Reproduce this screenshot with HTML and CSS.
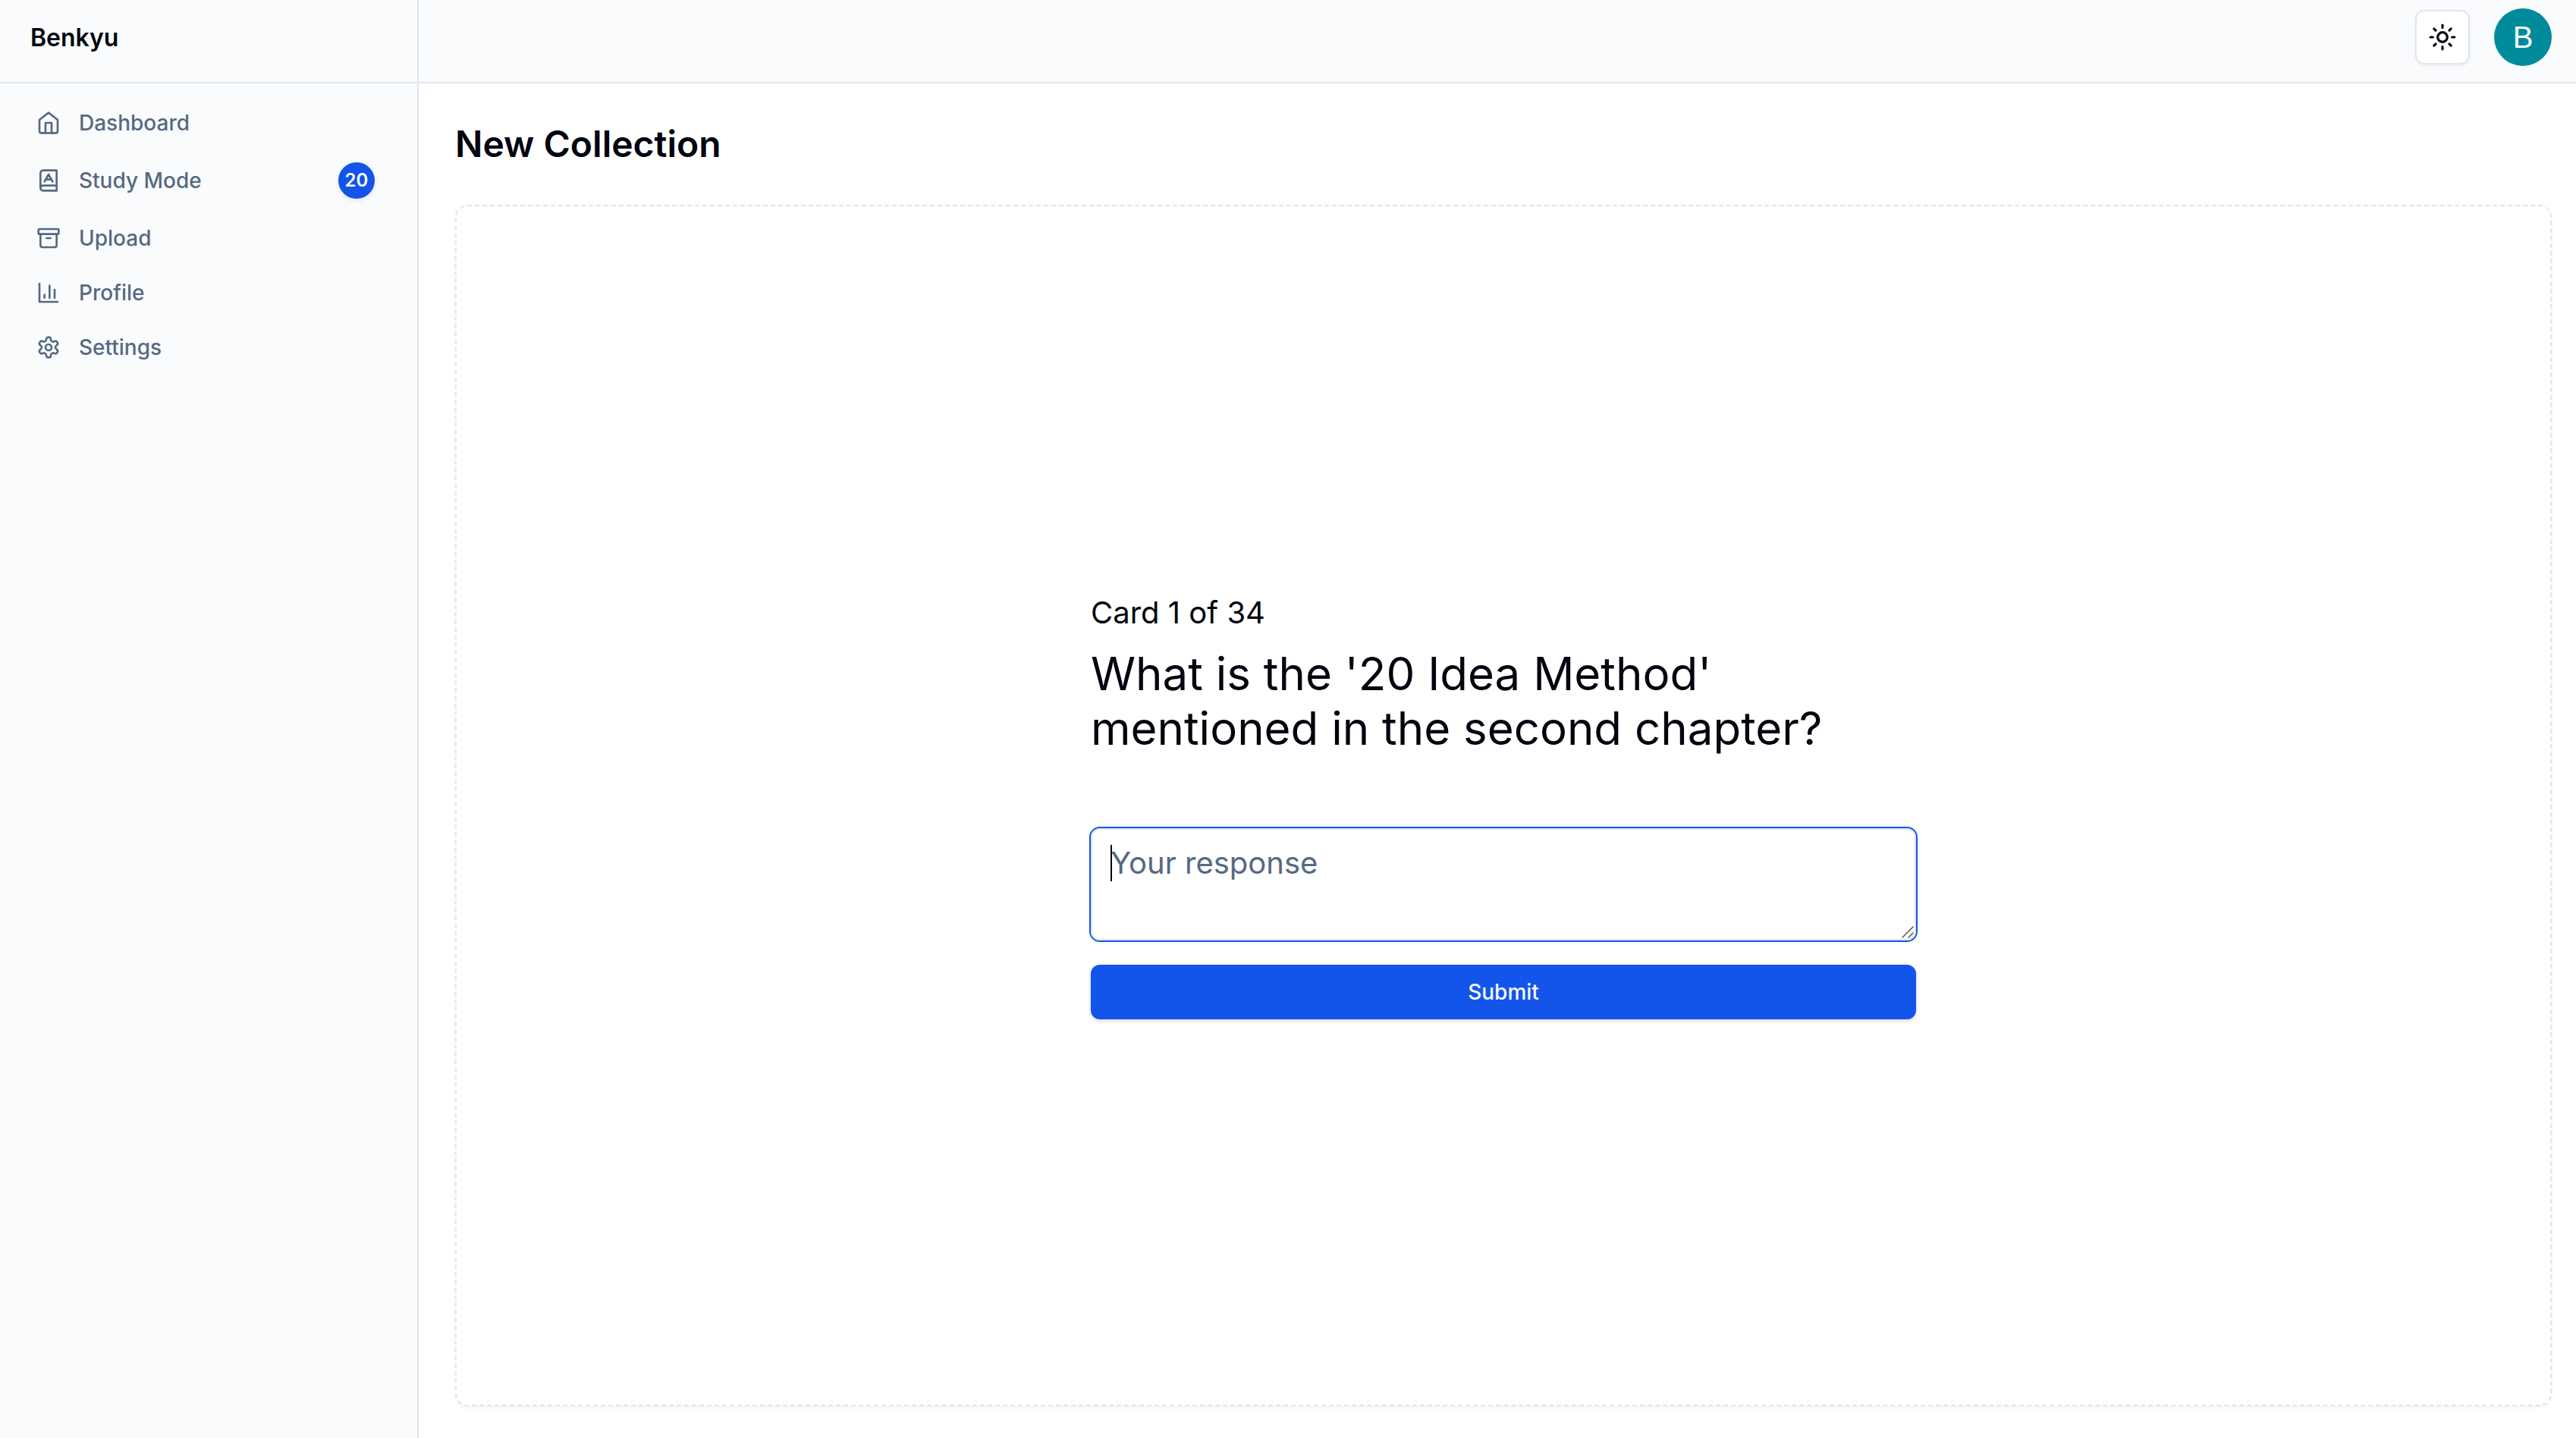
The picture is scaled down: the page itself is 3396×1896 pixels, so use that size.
FILE: index.html
```html
<!doctype html>
<html lang="en">
<head>
  <meta charset="UTF-8">
  <meta name="viewport" content="width=device-width,initial-scale=1">
  <title>Benkyu</title>
  <link rel="stylesheet" href="styles.css">
</head>
<body>
<div class="layout">
  <aside class="sidebar">
    <div class="brand"><a href="#">Benkyu</a></div>
    <nav class="nav">
      <a href="#">
        <svg class="icon" viewBox="0 0 24 24"><path d="m3 9 9-7 9 7v11a2 2 0 0 1-2 2H5a2 2 0 0 1-2-2z"/><path d="M9 22V12h6v10"/></svg>
        Dashboard
      </a>
      <a href="#">
        <svg class="icon" viewBox="0 0 24 24"><path d="M4 19.5v-15A2.5 2.5 0 0 1 6.5 2H20v20H6.5a2.5 2.5 0 0 1 0-5H20"/><path d="m8 13 4-7 4 7"/><path d="M9.1 11h5.7"/></svg>
        Study Mode
        <span class="badge">20</span>
      </a>
      <a href="#">
        <svg class="icon" viewBox="0 0 24 24"><rect width="20" height="5" x="2" y="3" rx="1"/><path d="M4 8v11a2 2 0 0 0 2 2h12a2 2 0 0 0 2-2V8"/><path d="M10 12h4"/></svg>
        Upload
      </a>
      <a href="#">
        <svg class="icon" viewBox="0 0 24 24"><path d="M3 3v18h18"/><path d="M18 17V9"/><path d="M13 17V5"/><path d="M8 17v-3"/></svg>
        Profile
      </a>
      <a href="#">
        <svg class="icon" viewBox="0 0 24 24"><path d="M12.22 2h-.44a2 2 0 0 0-2 2v.18a2 2 0 0 1-1 1.73l-.43.25a2 2 0 0 1-2 0l-.15-.08a2 2 0 0 0-2.73.73l-.22.38a2 2 0 0 0 .73 2.73l.15.1a2 2 0 0 1 1 1.72v.51a2 2 0 0 1-1 1.74l-.15.09a2 2 0 0 0-.73 2.73l.22.38a2 2 0 0 0 2.73.73l.15-.08a2 2 0 0 1 2 0l.43.25a2 2 0 0 1 1 1.73V20a2 2 0 0 0 2 2h.44a2 2 0 0 0 2-2v-.18a2 2 0 0 1 1-1.73l.43-.25a2 2 0 0 1 2 0l.15.08a2 2 0 0 0 2.73-.73l.22-.39a2 2 0 0 0-.73-2.73l-.15-.08a2 2 0 0 1-1-1.74v-.5a2 2 0 0 1 1-1.74l.15-.09a2 2 0 0 0 .73-2.73l-.22-.38a2 2 0 0 0-2.73-.73l-.15.08a2 2 0 0 1-2 0l-.43-.25a2 2 0 0 1-1-1.73V4a2 2 0 0 0-2-2z"/><circle cx="12" cy="12" r="3"/></svg>
        Settings
      </a>
    </nav>
  </aside>

  <div class="page">
    <header class="topbar">
      <button type="button" class="theme" aria-label="Toggle theme">
        <svg viewBox="0 0 24 24"><circle cx="12" cy="12" r="4"/><path d="M12 2v2"/><path d="M12 20v2"/><path d="m4.93 4.93 1.41 1.41"/><path d="m17.66 17.66 1.41 1.41"/><path d="M2 12h2"/><path d="M20 12h2"/><path d="m6.34 17.66-1.41 1.41"/><path d="m19.07 4.93-1.41 1.41"/></svg>
      </button>
      <button type="button" class="avatar" aria-label="Account">B</button>
    </header>

    <main class="main">
      <h1>New Collection</h1>
      <section class="panel">
        <form class="card">
          <p class="count">Card 1 of 34</p>
          <h2>What is the '20 Idea Method' mentioned in the second chapter?</h2>
          <div class="field">
            <textarea rows="2" placeholder="Your response" aria-label="Your response" autofocus></textarea>
            <span class="caret"></span>
            <svg class="grip" viewBox="0 0 16 16"><path d="M1 15 15 1M9 15l6-6"/></svg>
          </div>
          <button type="submit" class="submit">Submit</button>
        </form>
      </section>
    </main>
  </div>
</div>
</body>
</html>
```
FILE: styles.css
```css
* {
	box-sizing: border-box;
}
body {
	margin: 0;
	font-family: Inter, "Liberation Sans", sans-serif;
	font-size: 32px;
	color: #02040f;
	background: #fff;
}
h1, h2, p {
	margin: 0;
}
a {
	color: inherit;
	text-decoration: none;
}
button, textarea {
	font-family: inherit;
}
svg {
	fill: none;
	stroke: currentColor;
	stroke-width: 2;
	stroke-linecap: round;
	stroke-linejoin: round;
}

.layout {
	display: grid;
	grid-template-columns: 552px 1fr;
	min-height: 100vh;
}

/* sidebar */
.sidebar {
	background: #fafbfd;
	border-right: 2px solid #dfe6f0;
}
.brand {
	display: flex;
	align-items: center;
	height: 110px;
	padding: 0 40px 10px;
	border-bottom: 2px solid #dfe6f0;
	font-weight: 600;
}
.nav {
	padding: 16px 32px 16px 24px;
	font-size: 28px;
	line-height: 40px;
	font-weight: 500;
	color: #566982;
}
.nav a {
	display: flex;
	align-items: center;
	gap: 24px;
	padding: 16px 24px;
}
.icon {
	width: 32px;
	height: 32px;
}
.badge {
	display: flex;
	align-items: center;
	justify-content: center;
	width: 48px;
	height: 48px;
	margin-left: auto;
	border-radius: 50%;
	background: #1355ea;
	box-shadow: 0 2px 6px rgba(0, 0, 0, .1);
	color: #f8fafc;
	font-size: 24px;
	font-weight: 600;
}

/* top bar */
.page {
	display: flex;
	flex-direction: column;
}
.topbar {
	display: flex;
	align-items: center;
	justify-content: flex-end;
	gap: 32px;
	height: 110px;
	padding: 0 32px 10px 48px;
	border-bottom: 2px solid #dfe6f0;
	background: #fafbfd;
}
.theme {
	display: flex;
	align-items: center;
	justify-content: center;
	width: 72px;
	height: 72px;
	padding: 0;
	border: 2px solid #dfe6f0;
	border-radius: 12px;
	background: #fff;
	box-shadow: 0 2px 4px rgba(0, 0, 0, .05);
	color: #02040f;
}
.theme svg {
	width: 38px;
	height: 38px;
}
.avatar {
	width: 76px;
	height: 76px;
	padding: 0;
	border: 0;
	border-radius: 50%;
	background: #008b9b;
	color: #fff;
	font-family: "Liberation Sans", sans-serif;
	font-size: 40px;
}

/* content */
.main {
	flex: 1;
	display: flex;
	flex-direction: column;
	gap: 48px;
	padding: 48px 32px 42px 48px;
}
.main h1 {
	font-size: 48px;
	line-height: 64px;
	font-weight: 600;
}
.panel {
	flex: 1;
	display: flex;
	align-items: center;
	justify-content: center;
	border: 2px dashed #dfe6f0;
	border-radius: 16px;
	box-shadow: 0 2px 4px rgba(0, 0, 0, .05);
}
.card {
	width: 100%;
	max-width: 1088px;
}
.count {
	margin-bottom: 16px;
	font-size: 40px;
	line-height: 56px;
}
.card h2 {
	margin-bottom: 96px;
	font-size: 60px;
	line-height: 72px;
	font-weight: 400;
}
.field {
	position: relative;
	margin-bottom: 32px;
}
.field textarea {
	display: block;
	width: 100%;
	padding: 16px 24px;
	border: 2px solid #dfe6f0;
	border-radius: 12px;
	outline: 0;
	resize: none;
	background: transparent;
	box-shadow: 0 0 0 2px #1355ea;
	color: #02040f;
	caret-color: transparent;
	font-size: 40px;
	line-height: 56px;
}
.field textarea::placeholder {
	color: #566982;
}
.caret {
	position: absolute;
	left: 26px;
	top: 22px;
	width: 2px;
	height: 48px;
	background: #02040f;
	pointer-events: none;
}
.field textarea:not(:placeholder-shown) {
	caret-color: #02040f;
}
.field textarea:not(:placeholder-shown) + .caret {
	display: none;
}
.grip {
	position: absolute;
	right: 3px;
	bottom: 3px;
	width: 16px;
	height: 16px;
	color: #555;
	stroke-width: 1.5;
	pointer-events: none;
}
.submit {
	display: block;
	width: 100%;
	height: 72px;
	border: 0;
	border-radius: 12px;
	background: #1355ea;
	box-shadow: 0 2px 6px rgba(0, 0, 0, .15);
	color: #f8fafc;
	font-size: 28px;
	font-weight: 500;
}
```
